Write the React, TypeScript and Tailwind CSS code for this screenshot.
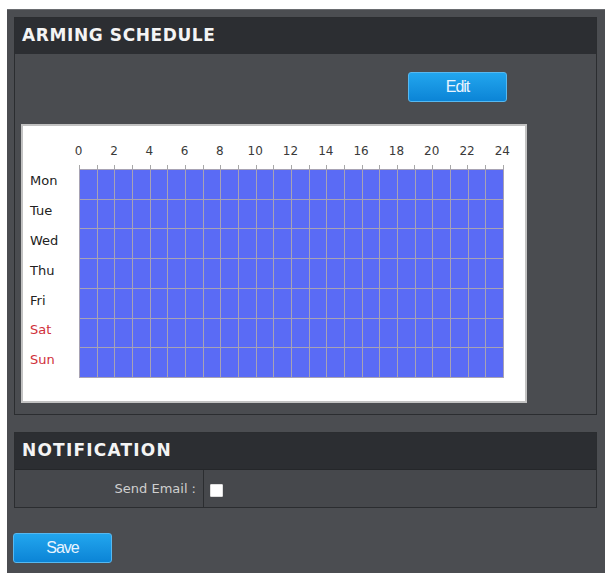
import React from "react";

const days = [
  { name: "Mon", red: false },
  { name: "Tue", red: false },
  { name: "Wed", red: false },
  { name: "Thu", red: false },
  { name: "Fri", red: false },
  { name: "Sat", red: true },
  { name: "Sun", red: true },
];

const hours = [0, 2, 4, 6, 8, 10, 12, 14, 16, 18, 20, 22, 24];

export default function App() {
  const cells = Array.from({ length: 7 * 24 });
  const ticks = Array.from({ length: 25 });
  return (
    <div className="w-[609px] h-[576px] bg-white pt-[9px] pl-[7px]" style={{ fontFamily: '"DejaVu Sans", Verdana, sans-serif' }}>
      <div className="w-[598px] h-[564px] bg-[#4b4d51] border-t border-[#6a6c70] pt-[7px] pl-[7px] flex flex-col">
        {/* Arming schedule section */}
        <div className="w-[583px] h-[398px] border border-[#2b2d30] flex flex-col">
          <div className="h-[36px] bg-[#2c2e32] flex items-center pl-[7px] text-[#f4f4f4] font-bold text-[17px] tracking-[0.6px]">
            ARMING SCHEDULE
          </div>
          <div className="flex-1 bg-[#4a4c50] flex flex-col">
            <div className="flex justify-end pr-[89px] pt-[18px]">
              <button className="w-[99px] h-[30px] rounded-[3px] border border-[#56b8f0] bg-gradient-to-b from-[#22a6ee] to-[#0b84d6] text-[#e8f4ff] text-[16px] tracking-[-1px]" style={{ fontFamily: '"Liberation Sans", Arial, sans-serif' }}>
                Edit
              </button>
            </div>
            <div className="ml-[6px] mt-[22px] w-[506px] h-[279px] bg-white border-2 border-[#c2c2c2] flex flex-col">
              {/* hour labels */}
              <div className="grid grid-cols-13 w-[459px] ml-[38px] mt-[17px] h-[16px] text-[12px] text-[#3a3a3a] leading-[16px]">
                {hours.map((h) => (
                  <div key={h} className="text-center">{h}</div>
                ))}
              </div>
              {/* ticks */}
              <div className="flex justify-between w-[425px] ml-[56px] mt-[6px] h-[4px]">
                {ticks.map((_, i) => (
                  <div key={i} className="w-px h-[4px] bg-[#a8a8a8]" />
                ))}
              </div>
              <div className="flex">
                <div className="w-[56px] flex flex-col pl-[7px]">
                  {days.map((d) => (
                    <div key={d.name} className={`h-[29.86px] flex items-center pb-[6px] text-[13px] ${d.red ? "text-[#d0303a]" : "text-[#222]"}`}>
                      {d.name}
                    </div>
                  ))}
                </div>
                <div className="w-[425px] h-[209px] bg-[#5a6bf5] grid grid-cols-24 grid-rows-7 border-l border-t border-[#a7a2b4]">
                  {cells.map((_, i) => (
                    <div key={i} className="border-r border-b border-[#a7a2b4]" />
                  ))}
                </div>
              </div>
            </div>
          </div>
        </div>

        {/* Notification section */}
        <div className="w-[583px] mt-[17px] border border-[#2b2d30] flex flex-col">
          <div className="h-[37px] bg-[#2c2e32] flex items-center pl-[7px] text-[#f4f4f4] font-bold text-[17px] tracking-[1.2px] border-b border-[#25272a]">
            NOTIFICATION
          </div>
          <div className="h-[37px] flex bg-[#46484c]">
            <div className="w-[189px] border-r border-[#2b2d30] flex items-center justify-end pr-[7px] text-[13px] text-[#cfcfcf]">
              Send Email :
            </div>
            <div className="flex items-center pl-[6px]">
              <input type="checkbox" className="appearance-none w-[13px] h-[13px] bg-white border border-[#ddd] rounded-[1px] mt-[3px]" />
            </div>
          </div>
        </div>

        <div className="mt-[25px] -ml-[1px]">
          <button className="w-[99px] h-[30px] rounded-[3px] border border-[#56b8f0] bg-gradient-to-b from-[#22a6ee] to-[#0b84d6] text-[#e8f4ff] text-[16px] tracking-[-1px]" style={{ fontFamily: '"Liberation Sans", Arial, sans-serif' }}>
            Save
          </button>
        </div>
      </div>
    </div>
  );
}
